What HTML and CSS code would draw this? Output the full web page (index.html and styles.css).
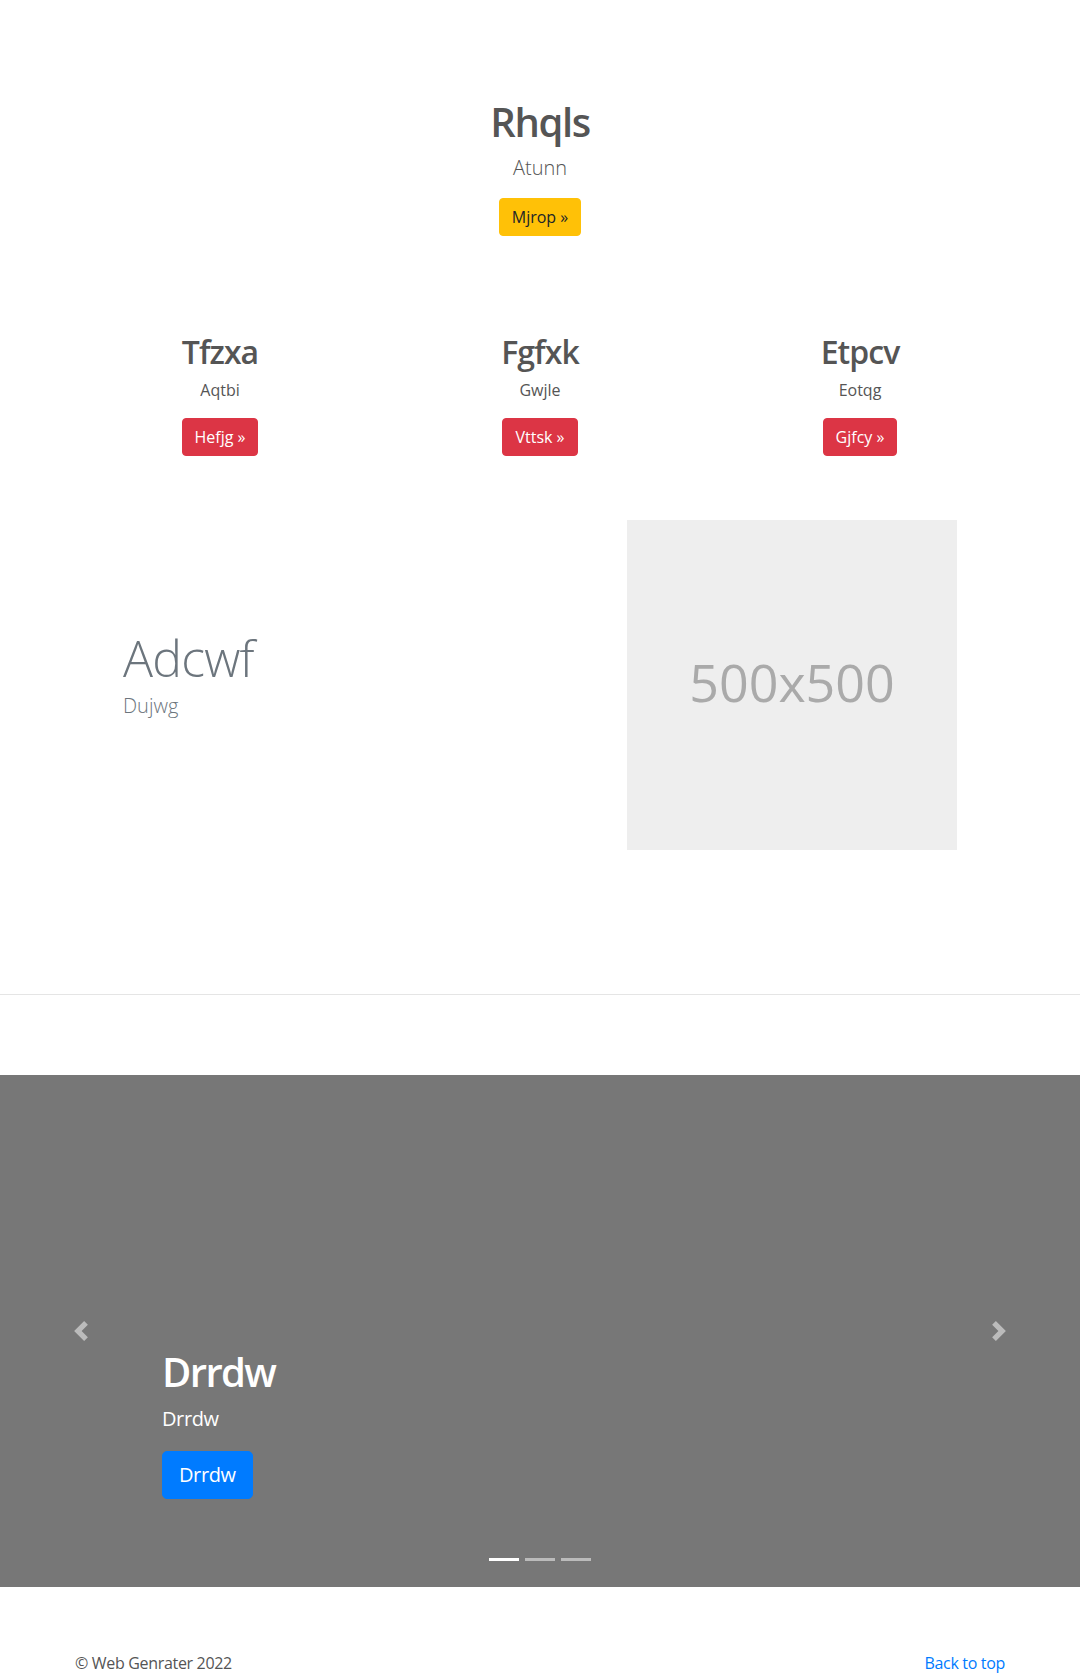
FILE: index.html
```html
<!DOCTYPE html>
<html lang="en">
<head>
<meta charset="utf-8">
<title>Web Genrater</title>
<link rel="stylesheet" href="styles.css">
</head>
<body>
<main>
  <section class="hero">
    <h1 class="hero-title">Rhqls</h1>
    <p class="lead">Atunn</p>
    <p class="btn-wrap"><a class="btn btn-warning" href="#">Mjrop &raquo;</a></p>
  </section>

  <section class="cols">
    <div class="col">
      <h2 class="col-title">Tfzxa</h2>
      <p class="col-text">Aqtbi</p>
      <p class="btn-wrap"><a class="btn btn-danger" href="#">Hefjg &raquo;</a></p>
    </div>
    <div class="col">
      <h2 class="col-title">Fgfxk</h2>
      <p class="col-text">Gwjle</p>
      <p class="btn-wrap"><a class="btn btn-danger" href="#">Vttsk &raquo;</a></p>
    </div>
    <div class="col">
      <h2 class="col-title">Etpcv</h2>
      <p class="col-text">Eotqg</p>
      <p class="btn-wrap"><a class="btn btn-danger" href="#">Gjfcy &raquo;</a></p>
    </div>
  </section>

  <section class="container featurette">
    <div class="feat-text">
      <h2 class="feat-title">Adcwf</h2>
      <p class="lead feat-lead">Dujwg</p>
    </div>
    <div class="feat-media">
      <div class="placeholder"><span>500x500</span></div>
    </div>
  </section>

  <hr class="divider">

  <section class="carousel">
    <div class="caption">
      <h1 class="caption-title">Drrdw</h1>
      <p class="caption-text">Drrdw</p>
      <p class="btn-wrap"><a class="btn btn-primary btn-lg" href="#">Drrdw</a></p>
    </div>
    <a class="control control-prev" href="#" aria-label="Previous">
      <svg viewBox="0 0 8 8" width="20" height="20"><path fill="#fff" d="M5.25 0l-4 4 4 4 1.5-1.5L4.25 4l2.5-2.5L5.25 0z"/></svg>
    </a>
    <a class="control control-next" href="#" aria-label="Next">
      <svg viewBox="0 0 8 8" width="20" height="20"><path fill="#fff" d="M2.75 0l-1.5 1.5L3.75 4l-2.5 2.5L2.75 8l4-4-4-4z"/></svg>
    </a>
    <ol class="indicators">
      <li class="active"></li>
      <li></li>
      <li></li>
    </ol>
  </section>
</main>

<footer class="container footer">
  <p>&copy; Web Genrater 2022</p>
  <p><a href="#">Back to top</a></p>
</footer>
</body>
</html>
```

FILE: styles.css
```css
* { box-sizing: border-box; }

html, body {
  margin: 0;
  padding: 0;
}

body {
  font-family: "Open Sans", "Noto Sans", sans-serif;
  font-size: 16px;
  line-height: 1.5;
  color: #555;
  background: #fff;
}

h1, h2, p { margin: 0; }

.container {
  width: 960px;
  margin: 0 auto;
  padding: 0 15px;
}

/* hero */
.hero {
  padding-top: 98px;
  text-align: center;
}
.hero-title {
  font-size: 40px;
  line-height: 1.2;
  font-weight: 600;
  letter-spacing: -0.035em;
  margin-bottom: 7px;
}
.lead {
  font-size: 20px;
  font-weight: 300;
}
.hero .lead { margin-bottom: 15px; }
.btn-wrap { margin-bottom: 16px; }

.btn {
  display: inline-block;
  padding: 6px 12px;
  font-size: 16px;
  line-height: 24px;
  border: 1px solid transparent;
  border-radius: 4px;
  text-decoration: none;
  vertical-align: middle;
}
.btn-warning { background: #ffc107; border-color: #ffc107; color: #212529; }
.btn-danger { background: #dc3545; border-color: #dc3545; color: #fff; }
.btn-primary { background: #007bff; border-color: #007bff; color: #fff; }
.btn-lg {
  padding: 8px 16px;
  font-size: 20px;
  line-height: 30px;
  border-radius: 5px;
  letter-spacing: -0.02em;
}

/* three columns */
.cols {
  width: 960px;
  margin: 0 auto;
  display: grid;
  grid-template-columns: repeat(3, 1fr);
  padding-top: 81px;
  text-align: center;
}
.col-title {
  font-size: 32px;
  line-height: 1.2;
  font-weight: 600;
  letter-spacing: -0.03em;
  margin-bottom: 7px;
}
.col-text { margin-bottom: 16px; }

/* featurette */
.featurette {
  display: grid;
  grid-template-columns: 1fr 1fr;
  align-items: center;
}
.feat-text, .feat-media {
  padding: 48px;
}
.feat-title {
  font-size: 50px;
  line-height: 1;
  font-weight: 300;
  letter-spacing: -0.8px;
  color: #6c757d;
  margin-bottom: 8px;
}
.feat-lead {
  color: #6c757d;
  margin-bottom: 16px;
}
.feat-media {
  display: flex;
  justify-content: flex-end;
}
.placeholder {
  width: 330px;
  height: 330px;
  background: #eee;
  color: #aaa;
  font-size: 52px;
  display: flex;
  align-items: center;
  justify-content: center;
  padding-bottom: 6px;
}

.divider {
  border: 0;
  border-top: 1px solid #e5e5e5;
  margin: 96px 0 0;
  height: 0;
}

/* carousel */
.carousel {
  position: relative;
  height: 512px;
  margin-top: 80px;
  background: #777;
}
.caption {
  position: absolute;
  left: 15%;
  right: 15%;
  bottom: 52px;
  padding: 20px 0;
  color: #fff;
}
.caption-title {
  font-size: 40px;
  line-height: 1.2;
  font-weight: 600;
  letter-spacing: -0.04em;
  margin-bottom: 8px;
}
.caption-text {
  font-size: 20px;
  line-height: 30px;
  letter-spacing: -0.02em;
  margin-bottom: 17px;
}
.control {
  position: absolute;
  top: 0;
  bottom: 0;
  width: 15%;
  display: flex;
  align-items: center;
  justify-content: center;
  opacity: 0.5;
}
.control-prev { left: 0; }
.control-next { right: 0; }
.control svg { display: block; }

.indicators {
  position: absolute;
  left: 0;
  right: 0;
  bottom: 26px;
  margin: 0;
  padding: 0;
  list-style: none;
  display: flex;
  justify-content: center;
  gap: 6px;
}
.indicators li {
  width: 30px;
  height: 3px;
  background: rgba(255, 255, 255, 0.5);
}
.indicators li.active { background: #fff; }

/* footer */
.footer {
  margin-top: 64px;
  display: flex;
  justify-content: space-between;
  letter-spacing: -0.02em;
}
.footer p { margin-bottom: 16px; }
.footer a {
  color: #007bff;
  text-decoration: none;
}
```
